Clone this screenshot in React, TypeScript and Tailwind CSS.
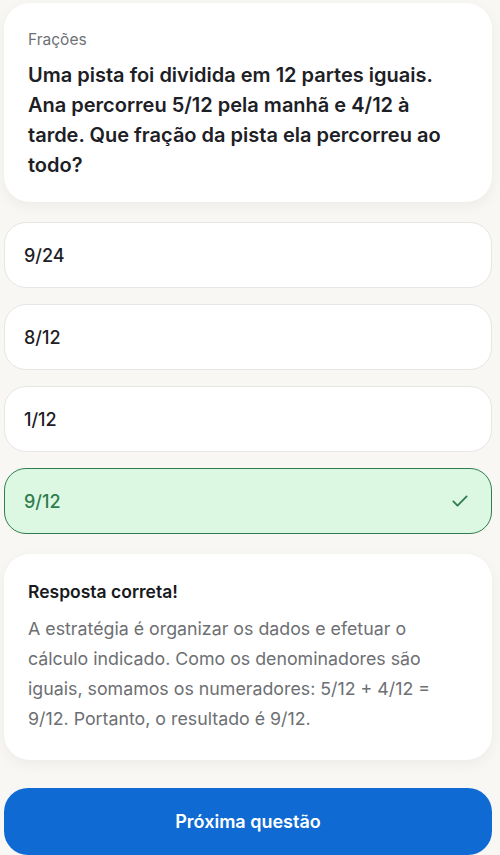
import React from 'react';

const options = [
  { label: '9/24', correct: false },
  { label: '8/12', correct: false },
  { label: '1/12', correct: false },
  { label: '9/12', correct: true },
];

export default function App() {
  return (
    <div
      className="min-h-[855px] w-[500px] bg-[#f8f7f4] pl-1 pr-2 pt-[3px] text-[#1c1f24]"
      style={{ fontFamily: 'Inter, "Noto Sans", sans-serif' }}
    >
      {/* Pergunta */}
      <div className="rounded-[26px] bg-white pl-6 pr-6 pt-[27px] pb-[22px] shadow-[0_4px_14px_rgba(0,0,0,0.05)]">
        <div className="text-[15.5px] leading-5 text-[#6f7176]">Frações</div>
        <p className="mt-[10px] text-[20px] font-semibold leading-[30px] text-[#1d2025]">
          Uma pista foi dividida em 12 partes iguais. Ana percorreu 5/12 pela manhã e 4/12 à tarde.
          Que fração da pista ela percorreu ao todo?
        </p>
      </div>

      {/* Alternativas */}
      <div className="mt-[20px] flex flex-col gap-4">
        {options.map((o) => (
          <div
            key={o.label}
            className={
              o.correct
                ? 'flex h-[66px] items-center justify-between rounded-[22px] border border-[#2f7d4f] bg-[#dcf7e2] pl-[19px] pr-[21px]'
                : 'flex h-[66px] items-center justify-between rounded-[22px] border border-[#e6e6e4] bg-white pl-[19px] pr-[21px]'
            }
          >
            <span
              className={
                o.correct
                  ? 'text-[18px] font-medium text-[#2f7d4f]'
                  : 'text-[18px] font-medium text-[#1d2025]'
              }
            >
              {o.label}
            </span>
            {o.correct && (
              <svg width="20" height="20" viewBox="0 0 24 24" fill="none" stroke="#2f7d4f" strokeWidth="2.2" strokeLinecap="round" strokeLinejoin="round">
                <path d="M4 12.5l5 5L20 6.5" />
              </svg>
            )}
          </div>
        ))}
      </div>

      {/* Explicação */}
      <div className="mt-[20px] rounded-[26px] bg-white pl-6 pr-[34px] pt-[26px] pb-[26px] shadow-[0_4px_14px_rgba(0,0,0,0.05)]">
        <div className="text-[17.5px] font-semibold leading-6 text-[#17191c]">Resposta correta!</div>
        <p className="mt-[10px] text-[17.8px] leading-[30px] text-[#6d6f73]">
          A estratégia é organizar os dados e efetuar o cálculo indicado. Como os denominadores são
          iguais, somamos os numeradores: 5/12 + 4/12 = 9/12. Portanto, o resultado é 9/12.
        </p>
      </div>

      {/* Botão */}
      <button className="mt-[28px] flex h-[67px] w-full items-center justify-center rounded-[24px] bg-[#0f6bd3] text-[18px] font-semibold text-white">
        Próxima questão
      </button>
    </div>
  );
}
